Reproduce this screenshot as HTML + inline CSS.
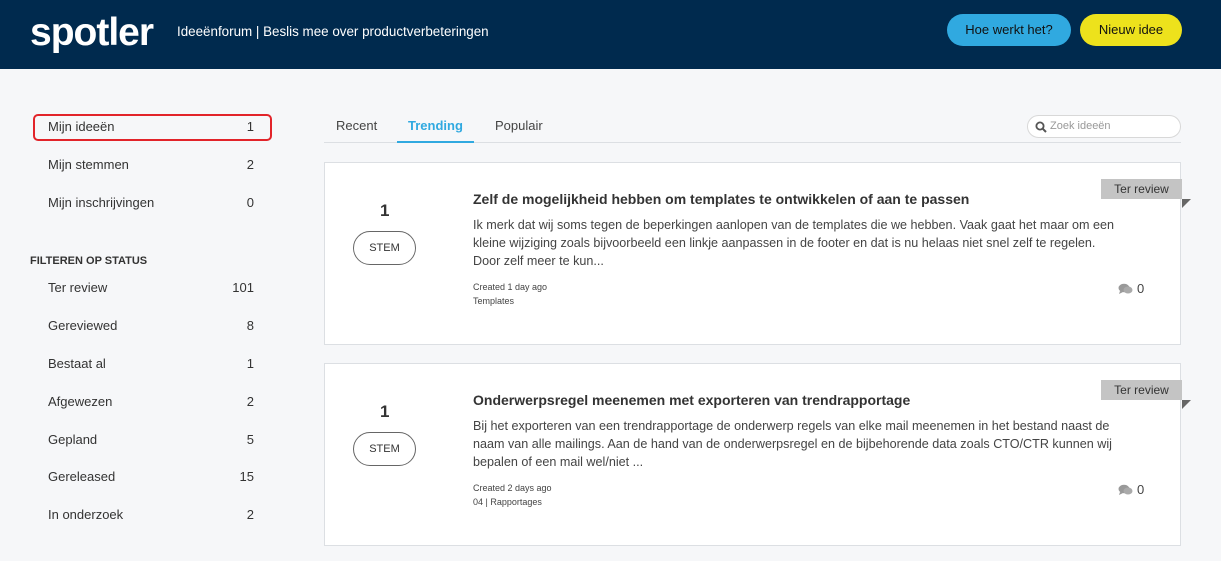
<!DOCTYPE html>
<html><head><style>
*{box-sizing:border-box;margin:0;padding:0}
body{width:1221px;height:561px;background:#f6f7f9;font-family:"Liberation Sans",sans-serif;color:#333;position:relative;overflow:hidden}
.hdr{position:absolute;left:0;top:0;width:1221px;height:69px;background:#002a4e}
.logo{position:absolute;left:30px;top:11px;color:#fff;font-size:39px;font-weight:bold;letter-spacing:-1px}
.tag{position:absolute;left:177px;top:24px;color:#fff;font-size:13.4px}
.btn{position:absolute;top:14px;height:32px;border-radius:16px;font-size:13px;line-height:32px;text-align:center}
.side{position:absolute;left:30px;font-size:13px}
.it{position:absolute;left:48px;width:206px;font-size:13px;color:#333}
.it span{float:right}
.tab{position:absolute;top:118px;font-size:13px;color:#444}
.card{position:absolute;left:324px;width:857px;height:183px;background:#fff;border:1px solid #dcdfe3}
.num{position:absolute;left:55px;top:38px;font-size:17px;font-weight:bold;color:#333}
.stem{position:absolute;left:28px;top:68px;width:63px;height:34px;border:1px solid #666;border-radius:17px;font-size:11px;text-align:center;line-height:32px}
.tt{position:absolute;left:148px;top:28px;font-size:14px;font-weight:bold;color:#333}
.ds{position:absolute;left:148px;top:53px;width:648px;font-size:12.6px;line-height:18px;color:#444}
.meta{position:absolute;left:148px;top:117px;font-size:9px;line-height:14px;color:#444}
.badge{position:absolute;left:776px;top:16px;width:81px;height:20px;background:#c4c4c4;font-size:12px;line-height:20px;text-align:center;color:#333}
.badge:after{content:"";position:absolute;right:-9px;top:20px;border-left:9px solid #666;border-bottom:9px solid transparent}
.cm{position:absolute;left:793px;top:118px;font-size:13px;color:#444}
.cm svg{vertical-align:-2px;margin-right:4px}
</style></head><body>
<div class="hdr">
<div class="logo">spotler</div>
<div class="tag">Ideeënforum | Beslis mee over productverbeteringen</div>
<div class="btn" style="left:947px;width:124px;background:#30a9e0;color:#111">Hoe werkt het?</div>
<div class="btn" style="left:1080px;width:102px;background:#ede21c;color:#111">Nieuw idee</div>
</div>
<div style="position:absolute;left:33px;top:114px;width:239px;height:27px;border:2px solid #e2242a;border-radius:5px"></div>
<div class="it" style="top:119px">Mijn ideeën<span>1</span></div>
<div class="it" style="top:157px">Mijn stemmen<span>2</span></div>
<div class="it" style="top:195px">Mijn inschrijvingen<span>0</span></div>
<div class="side" style="top:255px;font-size:11px;font-weight:bold;color:#333">FILTEREN OP STATUS</div>
<div class="it" style="top:280px">Ter review<span>101</span></div>
<div class="it" style="top:318px">Gereviewed<span>8</span></div>
<div class="it" style="top:356px">Bestaat al<span>1</span></div>
<div class="it" style="top:394px">Afgewezen<span>2</span></div>
<div class="it" style="top:432px">Gepland<span>5</span></div>
<div class="it" style="top:469px">Gereleased<span>15</span></div>
<div class="it" style="top:507px">In onderzoek<span>2</span></div>
<div style="position:absolute;left:324px;top:142px;width:857px;height:1px;background:#dcdfe3"></div>
<div class="tab" style="left:336px">Recent</div>
<div class="tab" style="left:408px;color:#30a9e0;font-weight:bold">Trending</div>
<div style="position:absolute;left:397px;top:141px;width:77px;height:2px;background:#30a9e0"></div>
<div class="tab" style="left:495px">Populair</div>
<div style="position:absolute;left:1027px;top:115px;width:154px;height:23px;border:1px solid #d8d8d8;border-radius:12px;background:#fff;font-size:11px;color:#999;line-height:21px;padding-left:22px">Zoek ideeën
<svg style="position:absolute;left:7px;top:5px" width="12" height="12" viewBox="0 0 12 12"><circle cx="5" cy="5" r="3.6" fill="none" stroke="#555" stroke-width="1.8"/><path d="M7.6 7.6L11 11" stroke="#555" stroke-width="2"/></svg></div>

<div class="card" style="top:162px">
<div class="num">1</div><div class="stem">STEM</div>
<div class="tt">Zelf de mogelijkheid hebben om templates te ontwikkelen of aan te passen</div>
<div class="ds">Ik merk dat wij soms tegen de beperkingen aanlopen van de templates die we hebben. Vaak gaat het maar om een kleine wijziging zoals bijvoorbeeld een linkje aanpassen in de footer en dat is nu helaas niet snel zelf te regelen. Door zelf meer te kun...</div>
<div class="meta">Created 1 day ago<br>Templates</div>
<div class="badge">Ter review</div>
<div class="cm"><svg width="15" height="12" viewBox="0 0 15 12"><ellipse cx="6" cy="5" rx="5.5" ry="4.2" fill="#999"/><path d="M2 8L1 11L5 9Z" fill="#999"/><ellipse cx="10" cy="7" rx="4.5" ry="3.5" fill="#aaa"/></svg>0</div>
</div>
<div class="card" style="top:363px">
<div class="num">1</div><div class="stem">STEM</div>
<div class="tt">Onderwerpsregel meenemen met exporteren van trendrapportage</div>
<div class="ds">Bij het exporteren van een trendrapportage de onderwerp regels van elke mail meenemen in het bestand naast de naam van alle mailings. Aan de hand van de onderwerpsregel en de bijbehorende data zoals CTO/CTR kunnen wij bepalen of een mail wel/niet ...</div>
<div class="meta">Created 2 days ago<br>04 | Rapportages</div>
<div class="badge">Ter review</div>
<div class="cm"><svg width="15" height="12" viewBox="0 0 15 12"><ellipse cx="6" cy="5" rx="5.5" ry="4.2" fill="#999"/><path d="M2 8L1 11L5 9Z" fill="#999"/><ellipse cx="10" cy="7" rx="4.5" ry="3.5" fill="#aaa"/></svg>0</div>
</div>
</body></html>
